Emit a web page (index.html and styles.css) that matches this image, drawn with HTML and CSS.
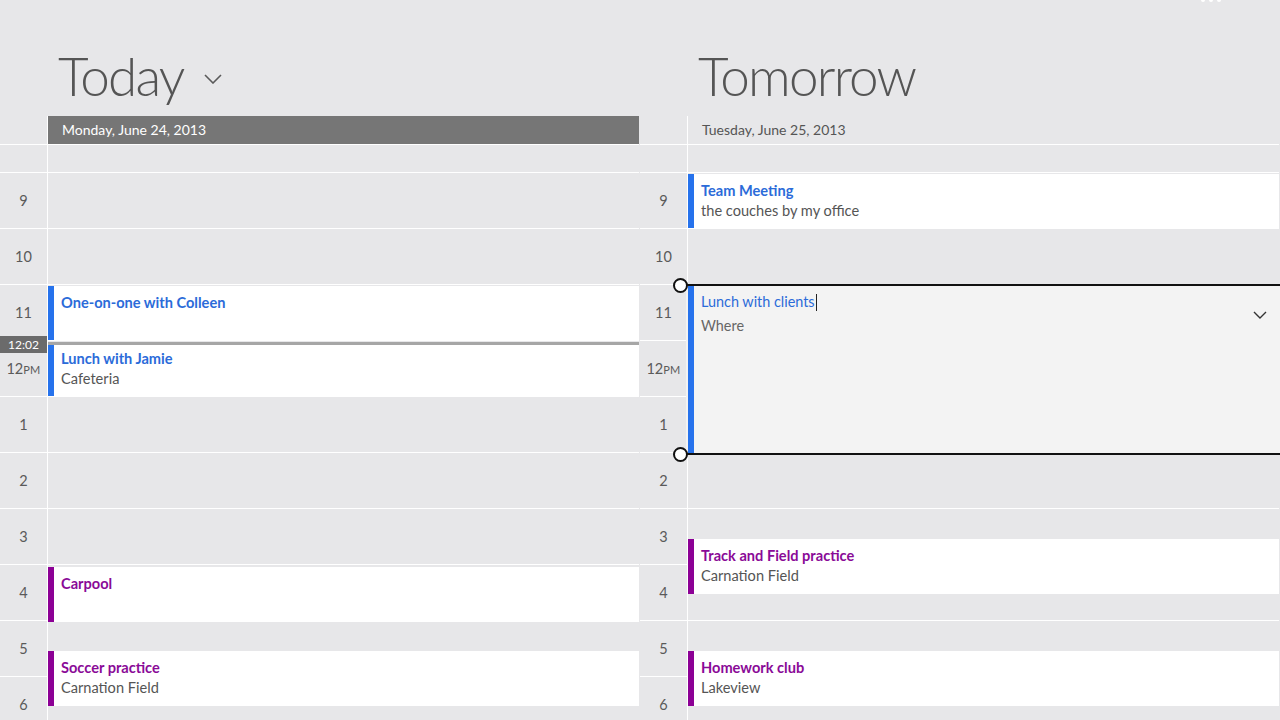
FILE: index.html
```html
<!DOCTYPE html>
<html>
<head>
<meta charset="utf-8">
<link rel="stylesheet" href="styles.css">
</head>
<body>
<div class="app">
  <div class="dots"><span></span><span></span><span></span></div>

  <section class="day">
    <header class="day-head">
      <h1 class="day-title">Today</h1>
      <svg class="title-chev" width="18" height="10" viewBox="0 0 18 10"><polyline points="1,1 9,9 17,1" fill="none" stroke="#5a5a5a" stroke-width="1.6"/></svg>
    </header>
    <div class="board">
      <div class="times grid">
        <div class="cell hdr"></div>
        <div class="cell half"></div>
        <div class="cell hour" style="grid-row:3 / 5">9</div>
        <div class="cell hour" style="grid-row:5 / 7">10</div>
        <div class="cell hour" style="grid-row:7 / 9">11</div>
        <div class="cell hour" style="grid-row:9 / 11">12<span class="pm">PM</span></div>
        <div class="cell hour" style="grid-row:11 / 13">1</div>
        <div class="cell hour" style="grid-row:13 / 15">2</div>
        <div class="cell hour" style="grid-row:15 / 17">3</div>
        <div class="cell hour" style="grid-row:17 / 19">4</div>
        <div class="cell hour" style="grid-row:19 / 21">5</div>
        <div class="cell hour" style="grid-row:21 / 23">6</div>
        <div class="now-badge">12:02</div>
      </div>
      <div class="col grid">
        <div class="cell hdr dark">Monday, June 24, 2013</div>
        <div class="cell half"></div>
        <div class="cell hour" style="grid-row:3 / 5"></div>
        <div class="cell hour" style="grid-row:5 / 7"></div>
        <div class="cell hour" style="grid-row:7 / 9"></div>
        <div class="cell hour" style="grid-row:9 / 11"></div>
        <div class="cell hour" style="grid-row:11 / 13"></div>
        <div class="cell hour" style="grid-row:13 / 15"></div>
        <div class="cell hour" style="grid-row:15 / 17"></div>
        <div class="cell hour" style="grid-row:17 / 19"></div>
        <div class="cell hour" style="grid-row:19 / 21"></div>
        <div class="cell hour" style="grid-row:21 / 23"></div>

        <div class="event blue" style="grid-row:7 / 9"><div class="ev-title">One-on-one with Colleen</div></div>
        <div class="event blue" style="grid-row:9 / 11"><div class="ev-title">Lunch with Jamie</div><div class="ev-sub">Cafeteria</div></div>
        <div class="event purple low" style="grid-row:17 / 19"><div class="ev-title">Carpool</div></div>
        <div class="event purple low" style="grid-row:20 / 22"><div class="ev-title">Soccer practice</div><div class="ev-sub">Carnation Field</div></div>
        <div class="now-line"></div>
      </div>
    </div>
  </section>

  <section class="day">
    <header class="day-head">
      <h1 class="day-title">Tomorrow</h1>
    </header>
    <div class="board">
      <div class="times grid">
        <div class="cell hdr"></div>
        <div class="cell half"></div>
        <div class="cell hour" style="grid-row:3 / 5">9</div>
        <div class="cell hour" style="grid-row:5 / 7">10</div>
        <div class="cell hour" style="grid-row:7 / 9">11</div>
        <div class="cell hour" style="grid-row:9 / 11">12<span class="pm">PM</span></div>
        <div class="cell hour" style="grid-row:11 / 13">1</div>
        <div class="cell hour" style="grid-row:13 / 15">2</div>
        <div class="cell hour" style="grid-row:15 / 17">3</div>
        <div class="cell hour" style="grid-row:17 / 19">4</div>
        <div class="cell hour" style="grid-row:19 / 21">5</div>
        <div class="cell hour" style="grid-row:21 / 23">6</div>
      </div>
      <div class="col grid">
        <div class="cell hdr light">Tuesday, June 25, 2013</div>
        <div class="cell half"></div>
        <div class="cell hour" style="grid-row:3 / 5"></div>
        <div class="cell hour" style="grid-row:5 / 7"></div>
        <div class="cell hour" style="grid-row:7 / 9"></div>
        <div class="cell hour" style="grid-row:9 / 11"></div>
        <div class="cell hour" style="grid-row:11 / 13"></div>
        <div class="cell hour" style="grid-row:13 / 15"></div>
        <div class="cell hour" style="grid-row:15 / 17"></div>
        <div class="cell hour" style="grid-row:17 / 19"></div>
        <div class="cell hour" style="grid-row:19 / 21"></div>
        <div class="cell hour" style="grid-row:21 / 23"></div>

        <div class="event blue" style="grid-row:3 / 5"><div class="ev-title">Team Meeting</div><div class="ev-sub">the couches by my office</div></div>
        <div class="editor" style="grid-row:7 / 13">
          <span class="handle top"></span>
          <span class="handle bottom"></span>
          <div class="ed-title">Lunch with clients<span class="caret"></span></div>
          <div class="ed-where">Where</div>
          <svg class="ed-chev" width="14" height="8" viewBox="0 0 14 8"><polyline points="1,1 7,7 13,1" fill="none" stroke="#333" stroke-width="1.4"/></svg>
        </div>
        <div class="event purple low" style="grid-row:16 / 18"><div class="ev-title">Track and Field practice</div><div class="ev-sub">Carnation Field</div></div>
        <div class="event purple low" style="grid-row:20 / 22"><div class="ev-title">Homework club</div><div class="ev-sub">Lakeview</div></div>
      </div>
    </div>
  </section>
</div>
</body>
</html>
```

FILE: styles.css
```css
* { box-sizing: border-box; }
html, body { margin: 0; padding: 0; }
body {
  width: 1280px;
  height: 720px;
  overflow: hidden;
  background: #e7e7e9;
  font-family: "Lato", "Open Sans", sans-serif;
  color: #555;
}
.app {
  position: relative;
  display: flex;
  width: 1280px;
  height: 720px;
}
.dots {
  position: absolute;
  top: -2px;
  left: 1201px;
  display: flex;
  gap: 4px;
}
.dots span {
  width: 4px;
  height: 4px;
  border-radius: 50%;
  background: #fff;
}
.day {
  width: 640px;
  flex: none;
}
.day-head {
  height: 116px;
  display: flex;
  align-items: flex-start;
  padding-left: 58px;
}
.day-title {
  margin: 0;
  padding-top: 43px;
  font-family: "Lato", sans-serif;
  font-weight: 300;
  font-size: 53px;
  line-height: 66px;
  color: #555;
  letter-spacing: -1.8px;
}
.title-chev {
  margin-top: 74px;
  margin-left: 20px;
}
.board {
  display: flex;
}
.grid {
  display: grid;
  grid-template-rows: repeat(22, 28px);
  grid-template-columns: 100%;
}
.times { width: 47px; flex: none; position: relative; }
.col {
  width: 592px;
  flex: none;
  border-left: 1px solid #fff;
}
.cell { grid-column: 1; }
.hdr { grid-row: 1 / 2; }
.half { grid-row: 2 / 3; border-top: 1px solid #fff; }
.hour { border-top: 1px solid #fff; }
.times .hour {
  display: flex;
  align-items: center;
  justify-content: center;
  font-size: 14.5px;
  color: #5a5a5a;
}
.pm { font-size: 11px; letter-spacing: 0.3px; padding-top: 2px; }
.hdr.dark {
  background: #767676;
  color: #fff;
  font-size: 14px;
  line-height: 28px;
  padding-left: 14px;
}
.hdr.light {
  color: #555;
  font-size: 14px;
  line-height: 28px;
  padding-left: 14px;
}
.now-badge {
  grid-column: 1;
  grid-row: 8 / 10;
  align-self: center;
  margin-top: 9px;
  height: 17px;
  background: #6b6b6b;
  color: #fff;
  font-size: 12px;
  line-height: 17px;
  text-align: center;
  z-index: 2;
}
.event {
  grid-column: 1;
  margin-top: 2px;
  background: #fff;
  border-left: 6px solid;
  padding: 7px 0 0 7px;
  font-size: 14.6px;
  line-height: 20px;
}
.event.low { margin-top: 3px; margin-bottom: -2px; }
.event.blue { border-color: #2672ec; }
.event.purple { border-color: #8c0095; }
.ev-title { font-weight: 700; }
.blue .ev-title { color: #2b6bd9; }
.purple .ev-title { color: #8a0a97; }
.ev-sub { color: #555; }
.now-line {
  grid-column: 1;
  grid-row: 9 / 10;
  align-self: start;
  margin-top: 2px;
  height: 3px;
  background: #a6a6a6;
  z-index: 1;
}
.editor {
  grid-column: 1;
  position: relative;
  margin-bottom: -3px;
  margin-left: -2px;
  margin-right: -2px;
  background: #f3f3f3;
  border-top: 2.5px solid #111;
  border-bottom: 2.5px solid #111;
  padding: 5px 0 0 15px;
  z-index: 3;
}
.editor::before {
  content: "";
  position: absolute;
  left: 2px;
  top: 0;
  bottom: 0;
  width: 6px;
  background: #2672ec;
}
.handle {
  position: absolute;
  left: -13px;
  width: 15px;
  height: 15px;
  border-radius: 50%;
  background: #fff;
  border: 2.5px solid #111;
}
.handle.top { top: -8.5px; }
.handle.bottom { bottom: -8.5px; }
.ed-title {
  font-size: 14.4px;
  line-height: 22px;
  color: #2b6bd9;
  display: flex;
  align-items: center;
}
.caret {
  display: inline-block;
  width: 1px;
  height: 17px;
  background: #222;
  margin-left: 1px;
}
.ed-where {
  margin-top: 2px;
  font-size: 14.4px;
  line-height: 22px;
  color: #666;
}
.ed-chev {
  position: absolute;
  right: 14px;
  top: 25px;
}
```
